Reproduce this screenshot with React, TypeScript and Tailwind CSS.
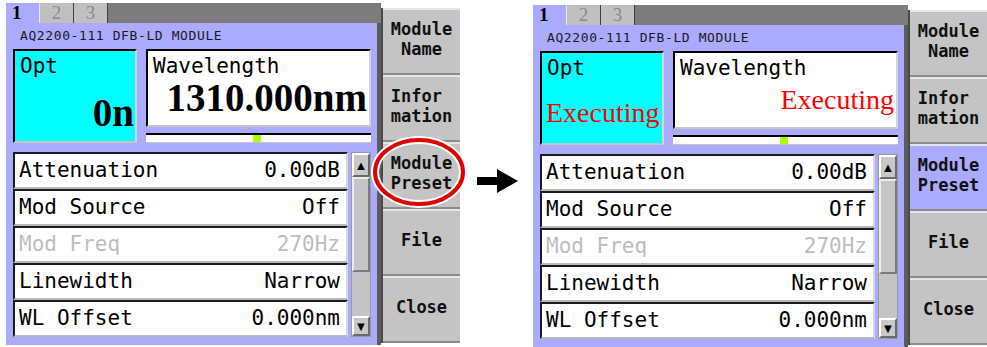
import React from 'react';

const mono = "font-['DejaVu_Sans_Mono','Liberation_Mono',monospace]";
const serif = "font-['Liberation_Serif','Times_New_Roman',serif]";

type RowProps = { label: string; value: string; disabled?: boolean };

const rows: RowProps[] = [
  { label: 'Attenuation', value: '0.00dB' },
  { label: 'Mod Source', value: 'Off' },
  { label: 'Mod Freq', value: '270Hz', disabled: true },
  { label: 'Linewidth', value: 'Narrow' },
  { label: 'WL Offset', value: '0.000nm' },
];

const ParamRow: React.FC<RowProps> = ({ label, value, disabled }) => (
  <div
    className={`h-[37px] flex items-center justify-between bg-white border-t-2 border-l-2 border-t-[#1c1c1c] border-l-[#1c1c1c] border-b-2 border-r-2 border-b-[#b8b8b8] border-r-[#d8d8d8] pl-[4px] pr-[6px] text-[21px] leading-none whitespace-pre ${mono} ${
      disabled ? 'text-[#bdbdbd]' : 'text-black'
    }`}
  >
    <span>{label}</span>
    <span>{value}</span>
  </div>
);

const Scrollbar: React.FC = () => (
  <div className="w-[20px] h-[185px] flex flex-col bg-[#c4c4c4] border border-[#9a9a9a]">
    <div className="h-[24px] flex items-center justify-center bg-[#c8c8c8] border-t-2 border-l-2 border-t-white border-l-white border-b-2 border-r-2 border-b-[#6a6a6a] border-r-[#6a6a6a] text-[13px] leading-none text-black">
      ▲
    </div>
    <div className="h-[95px] bg-[#c6c6c6] border-t-2 border-l-2 border-t-[#ececec] border-l-[#ececec] border-b-2 border-r-2 border-b-[#7a7a7a] border-r-[#7a7a7a]" />
    <div className="flex-1" />
    <div className="h-[20px] flex items-center justify-center bg-[#c8c8c8] border-t-2 border-l-2 border-t-white border-l-white border-b-2 border-r-2 border-b-[#6a6a6a] border-r-[#6a6a6a] text-[13px] leading-none text-black">
      ▼
    </div>
  </div>
);

type ButtonProps = { lines: string[]; active?: boolean };

const SideButton: React.FC<ButtonProps> = ({ lines, active }) => (
  <div
    className={`h-[67px] flex flex-col items-center justify-center pb-[5px] border-t-2 border-t-[#e6e6e6] border-b-2 border-b-[#8c8c8c] text-[17px] leading-[20px] font-bold whitespace-pre text-[#111] ${mono} ${
      active ? 'bg-[#aaaaff]' : 'bg-[#c4c4c4]'
    }`}
  >
    {lines.map(l => (
      <span key={l}>{l}</span>
    ))}
  </div>
);

const Screen: React.FC<{ executing?: boolean; active?: boolean }> = ({ executing, active }) => (
  <div className="w-[454px] h-[342px] flex">
    <div className="w-[375px] flex flex-col">
      {/* tab strip */}
      <div className="h-[20px] flex bg-[#7c7c7c]">
        <div className={`w-[33px] bg-[#aaaaff] pl-[6px] text-[19px] leading-[20px] font-bold text-black ${serif}`}>1</div>
        <div className={`w-[35px] bg-[#c0c0c0] border-l border-r border-l-[#e8e8e8] border-r-[#404040] text-center text-[19px] leading-[20px] text-[#8a8a8a] ${serif}`}>2</div>
        <div className={`w-[34px] bg-[#c0c0c0] border-r border-r-[#404040] text-center text-[19px] leading-[20px] text-[#8a8a8a] ${serif}`}>3</div>
      </div>
      <div className="flex flex-1">
        {/* lavender panel */}
        <div className="w-[371px] bg-[#aaaaff] flex flex-col pl-[7px] pr-[6px]">
          <div className={`h-[26px] flex items-center pl-[7px] text-[13px] tracking-[0.6px] text-[#1a1a1a] ${mono}`}>
            AQ2200-111 DFB-LD MODULE
          </div>
          <div className="h-[94px] flex gap-[9px]">
            <div className={`w-[124px] h-[94px] flex flex-col bg-[#00ffff] border-t-2 border-l-2 border-t-black border-l-black border-b-2 border-r-2 border-b-[#c4c4c4] border-r-[#d4d4d4] overflow-hidden ${mono}`}>
              <div className="pl-[5px] pt-[3px] text-[21px] leading-[24px] text-black">Opt</div>
              {executing ? (
                <div className={`pl-[4px] pt-[18px] text-[28px] leading-[30px] text-[#ff0000] whitespace-nowrap ${serif}`}>Executing</div>
              ) : (
                <div className={`text-right pr-[1px] pt-[15px] text-[39px] leading-[40px] font-bold text-black ${serif}`}>0n</div>
              )}
            </div>
            <div className="w-[225px] flex flex-col">
              <div className={`h-[78px] bg-white border-t-2 border-l-2 border-t-black border-l-black border-b-2 border-r-2 border-b-[#c4c4c4] border-r-[#d4d4d4] overflow-hidden ${mono}`}>
                <div className="pl-[5px] pt-[3px] text-[21px] leading-[24px] text-black">Wavelength</div>
                {executing ? (
                  <div className={`text-right pr-[2px] pt-[5px] text-[28px] leading-[30px] text-[#ff0000] whitespace-nowrap ${serif}`}>Executing</div>
                ) : (
                  <div className={`text-right pr-[2px] text-[39px] leading-[40px] font-bold text-black whitespace-nowrap ${serif}`}>1310.000nm</div>
                )}
              </div>
              <div className="mt-[6px] h-[10px] bg-white border-t-2 border-t-black border-b border-b-[#c4c4c4] flex">
                <div className="w-[107px]" />
                <div className="w-[8px] bg-[#aaff00]" />
              </div>
            </div>
          </div>
          <div className="mt-[9px] flex gap-[3px]">
            <div className="w-[335px] flex flex-col">
              {rows.map(r => (
                <ParamRow key={r.label} {...r} />
              ))}
            </div>
            <Scrollbar />
          </div>
        </div>
        <div className="w-[4px] bg-[#5c5c5c]" />
      </div>
    </div>
    {/* soft keys */}
    <div className="w-[79px] pt-[5px] flex flex-col">
      <div className="flex flex-col border-l-2 border-l-[#4a4a4a] bg-[#8c8c8c]">
        <SideButton lines={['Module', 'Name']} />
        <SideButton lines={['Infor ', 'mation']} />
        <SideButton lines={['Module', 'Preset']} active={active} />
        <SideButton lines={['File']} />
        <SideButton lines={['Close']} />
      </div>
    </div>
  </div>
);

export default function App() {
  return (
    <div className="relative w-[987px] h-[347px] bg-white flex overflow-hidden">
      <div className="ml-[6px] mt-[3px]">
        <Screen />
      </div>
      <div className="w-[73px]">
        <svg className="ml-[17px] mt-[169px]" width="41" height="24" viewBox="0 0 41 24">
          <polygon points="0,8 20,8 20,0 41,12 20,24 20,16 0,16" fill="#000" />
        </svg>
      </div>
      <div className="mt-[5px]">
        <Screen executing active />
      </div>
      <svg className="absolute left-[371px] top-[136px]" width="96" height="72" viewBox="0 0 96 72">
        <ellipse cx="48" cy="36" rx="44" ry="32" fill="none" stroke="#fff" strokeWidth="8" />
        <ellipse cx="48" cy="36" rx="44" ry="32" fill="none" stroke="#e00000" strokeWidth="4" />
      </svg>
    </div>
  );
}
